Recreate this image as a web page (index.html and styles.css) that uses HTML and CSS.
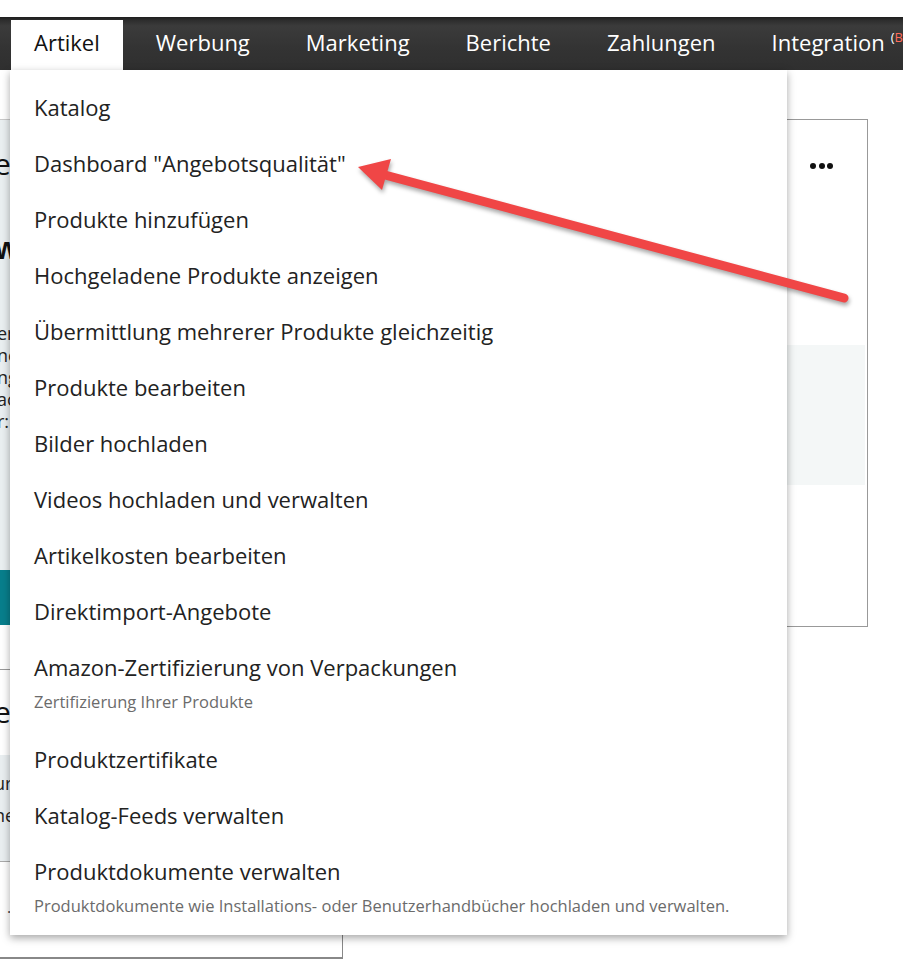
FILE: index.html
```html
<!DOCTYPE html>
<html lang="de">
<head>
    <meta charset="UTF-8">
    <meta name="viewport" content="width=device-width, initial-scale=1.0">
    <title>Artikel</title>
    <link rel="stylesheet" href="styles.css">
</head>
<body>
    <header class="topbar">
        <nav class="tabs">
            <a href="#" class="tab active">Artikel</a>
            <a href="#" class="tab">Werbung</a>
            <a href="#" class="tab">Marketing</a>
            <a href="#" class="tab">Berichte</a>
            <a href="#" class="tab">Zahlungen</a>
            <a href="#" class="tab">Integration <sup class="beta">(<span>Beta</span>)</sup></a>
        </nav>
        <div class="dropdown">
            <ul class="menu-list">
                <li class="menu-item"><span class="item-title">Katalog</span></li>
                <li class="menu-item"><span class="item-title">Dashboard "Angebotsqualität"</span></li>
                <li class="menu-item"><span class="item-title">Produkte hinzufügen</span></li>
                <li class="menu-item"><span class="item-title">Hochgeladene Produkte anzeigen</span></li>
                <li class="menu-item"><span class="item-title">Übermittlung mehrerer Produkte gleichzeitig</span></li>
                <li class="menu-item"><span class="item-title">Produkte bearbeiten</span></li>
                <li class="menu-item"><span class="item-title">Bilder hochladen</span></li>
                <li class="menu-item"><span class="item-title">Videos hochladen und verwalten</span></li>
                <li class="menu-item"><span class="item-title">Artikelkosten bearbeiten</span></li>
                <li class="menu-item"><span class="item-title">Direktimport-Angebote</span></li>
                <li class="menu-item has-sub">
                    <span class="item-title">Amazon-Zertifizierung von Verpackungen</span>
                    <span class="item-sub">Zertifizierung Ihrer Produkte</span>
                </li>
                <li class="menu-item"><span class="item-title">Produktzertifikate</span></li>
                <li class="menu-item"><span class="item-title">Katalog-Feeds verwalten</span></li>
                <li class="menu-item has-sub">
                    <span class="item-title">Produktdokumente verwalten</span>
                    <span class="item-sub">Produktdokumente wie Installations- oder Benutzerhandbücher hochladen und verwalten.</span>
                </li>
            </ul>
        </div>
    </header>

    <main class="content">
        <aside class="side">
            <section class="side-box">
                <div class="tip-panel">
                    <h2 class="tip-title">empfohlene Schritte</h2>
                    <h3 class="tip-heading">wichtige Hinweise</h3>
                    <p class="tip-text">erfahren Sie, wie Sie<br>neue Angebote<br>ngen erstellen<br>achten Sie auf<br>r: Vorlagen</p>
                </div>
                <button class="tip-button">Jetzt starten</button>
            </section>
            <section class="side-box lower">
                <h2 class="tip-title">erste Schritte</h2>
                <div class="note-panel">
                    <p>ur Ihre Artikel<br>neue Vorlagen</p>
                </div>
                <p class="small-note">. Weitere Informationen</p>
                <div class="side-rule"></div>
            </section>
        </aside>

        <section class="card">
            <div class="card-head">
                <span class="more"><i></i><i></i><i></i></span>
            </div>
            <div class="card-band"></div>
        </section>
    </main>

    <svg class="annotation" width="903" height="961" viewBox="0 0 903 961">
        <line x1="385" y1="175" x2="844" y2="298" stroke="#f04646" stroke-width="9" stroke-linecap="round"/>
        <polygon points="358,167 391,159 382,190" fill="#f04646"/>
    </svg>
</body>
</html>
```

FILE: styles.css
```css
* {
    box-sizing: border-box;
}

body {
    font-family: 'Open Sans', 'Noto Sans', sans-serif;
    background: #fff;
    color: #222;
    margin: 0;
    padding-top: 17px;
    height: 961px;
    overflow: hidden;
    position: relative;
}

/* top navigation */

.topbar {
    position: relative;
    z-index: 2;
}

.tabs {
    display: flex;
    gap: 10px;
    height: 53px;
    padding-left: 11px;
    background: linear-gradient(to bottom, #1e1e1e 0, #2c2c2c 3px, #3b3b3b 9px, #333 60%, #2f2f2f 100%);
}

.tab {
    display: flex;
    align-items: center;
    margin-top: 3px;
    padding: 0 23px 6px;
    color: #fff;
    font-size: 22px;
    text-decoration: none;
    white-space: nowrap;
}

.tab.active {
    background: #fff;
    color: #111;
}

.beta {
    font-size: 13px;
    margin-left: 6px;
    align-self: flex-start;
    margin-top: 8px;
}

.beta span {
    color: #ff6b5a;
}

/* dropdown */

.dropdown {
    position: absolute;
    top: 100%;
    left: 10px;
    width: 777px;
    background: #fff;
    box-shadow: 0 3px 8px rgba(0, 0, 0, 0.35);
    padding-top: 9px;
}

.menu-list {
    list-style: none;
    margin: 0;
    padding: 0;
}

.menu-item {
    display: flex;
    flex-direction: column;
    padding: 14px 24px;
}

.item-title {
    font-size: 22px;
    line-height: 28px;
    color: #222;
}

.item-sub {
    font-size: 16.5px;
    line-height: 20px;
    margin-top: 11px;
    color: #6b6b6b;
}

.menu-item.has-sub {
    padding-bottom: 19px;
}

/* page behind the menu */

.content {
    display: grid;
    grid-template-columns: 349px 503px;
    column-gap: 22px;
    align-items: start;
    margin: 49px 0 0 -6px;
}

.side {
    white-space: nowrap;
    overflow: hidden;
}

/* only the left edge of these texts shows beside the menu */
.tip-title,
.tip-heading,
.tip-text,
.note-panel p,
.small-note {
    width: 18px;
    overflow: hidden;
}

.tip-panel {
    height: 451px;
    border-top: 1px solid #c9c9c9;
    background: #eaeff1;
}

.tip-title {
    margin: 26px 0 0;
    font-size: 30px;
    line-height: 36px;
    font-weight: 400;
    color: #111;
}

.tip-heading {
    margin: 48px 0 0;
    font-size: 30px;
    line-height: 36px;
    font-weight: 700;
    color: #111;
}

.tip-text {
    margin: 56px 0 0;
    padding-left: 3px;
    font-size: 18px;
    line-height: 22px;
    color: #222;
}

.tip-button {
    display: block;
    width: 100%;
    height: 55px;
    border: none;
    background: #087f8c;
    color: #fff;
    font: inherit;
}

.side-box.lower {
    margin-top: 44px;
    border-top: 1px solid #999;
    border-right: 1px solid #888;
}

.side-box.lower .tip-title {
    margin-top: 24px;
}

.note-panel {
    height: 107px;
    margin-top: 25px;
    padding-top: 12px;
    background: #e9eef0;
    border-bottom: 1px solid #aaa;
}

.note-panel p {
    margin: 0;
    font-size: 18px;
    line-height: 32px;
}

.small-note {
    margin: 34px 0 0;
    padding-left: 13px;
    width: 22px;
    font-size: 16px;
    line-height: 22px;
    color: #444;
}

.side-rule {
    height: 2px;
    margin-top: 39px;
    background: #888;
}

.card {
    height: 508px;
    border: 1px solid #999;
    background: #fff;
}

.card-head {
    height: 92px;
    display: flex;
    justify-content: flex-end;
    align-items: center;
    padding-right: 34px;
}

.more {
    display: flex;
    gap: 2.5px;
}

.more i {
    width: 6px;
    height: 6px;
    border-radius: 50%;
    background: #111;
}

.card-band {
    height: 140px;
    margin: 133px 2px 0 0;
    background: #f4f7f7;
}

/* red pointer drawn over the screenshot */

.annotation {
    position: absolute;
    top: 0;
    left: 0;
    z-index: 3;
    pointer-events: none;
    filter: drop-shadow(1px 3px 2px rgba(0, 0, 0, 0.35));
}
```
